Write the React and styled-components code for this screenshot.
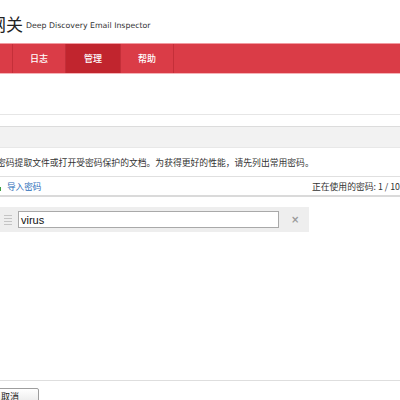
import React from "react";
import styled, { createGlobalStyle } from "styled-components";

const Global = createGlobalStyle`
  html, body { margin: 0; padding: 0; background: #fff; overflow: hidden; }
  body { font-family: "Liberation Sans", "Noto Sans CJK SC", sans-serif; color: #333; }
`;

const Page = styled.div`
  width: 400px;
  height: 400px;
  overflow: hidden;
  display: flex;
  flex-direction: column;
`;

const Header = styled.div`
  height: 43px;
  display: flex;
  align-items: center;
  padding-top: 4px;
  box-sizing: border-box;
  white-space: nowrap;
`;

const Brand = styled.span`
  font-family: "Noto Sans CJK SC", sans-serif;
  font-size: 17px;
  color: #222;
  margin-left: -11px;
`;

const Product = styled.span`
  font-family: "DejaVu Sans", sans-serif;
  font-size: 7.8px;
  color: #333;
  margin-left: 3px;
  margin-top: 3px;
`;

const Nav = styled.div`
  height: 31px;
  background: #da3c47;
  border-top: 1px solid #f29aa0;
  border-bottom: 1px solid #f5b3b7;
  box-sizing: border-box;
  display: flex;
  padding-left: 12px;
`;

const NavItem = styled.div`
  width: ${(p) => p.$w}px;
  display: flex;
  align-items: center;
  justify-content: center;
  color: #fff;
  font-family: "Noto Sans CJK SC", sans-serif;
  font-size: 9px;
  font-weight: 500;
  background: ${(p) => (p.$active ? "#c1252e" : "transparent")};
  border-left: 1px solid #c42f39;
  box-sizing: border-box;
  &:last-child { border-right: 1px solid #c42f39; }
`;

const Divider = styled.div`
  margin-top: 40px;
  border-top: 1px solid #e6e6e6;
`;

const Band = styled.div`
  margin-top: 11px;
  height: 22px;
  background: #f2f2f2;
  border-top: 1px solid #dcdcdc;
  border-bottom: 1px solid #e8e8e8;
  box-sizing: border-box;
`;

const Desc = styled.div`
  margin-top: 9px;
  margin-left: -3px;
  font-family: "Noto Sans CJK SC", sans-serif;
  font-size: 8.8px;
  line-height: 12px;
  color: #333;
  white-space: nowrap;
`;

const Toolbar = styled.div`
  margin-top: 7px;
  height: 21px;
  border-top: 1px solid #e0e0e0;
  border-bottom: 2px solid #dadada;
  box-sizing: border-box;
  display: flex;
  align-items: center;
  justify-content: space-between;
  white-space: nowrap;
`;

const ImportLink = styled.span`
  display: flex;
  align-items: center;
  gap: 6px;
  margin-left: -9px;
  font-family: "Noto Sans CJK SC", sans-serif;
  font-size: 8.6px;
  color: #2a6cb8;
`;

const Counter = styled.span`
  font-family: "Noto Sans CJK SC", sans-serif;
  font-size: 8.8px;
  color: #333;
`;

const ItemRow = styled.div`
  margin-top: 10px;
  width: 309px;
  height: 25px;
  background: #eeeeee;
  display: flex;
  align-items: center;
  box-sizing: border-box;
`;

const Handle = styled.div`
  width: 8px;
  margin-left: 4px;
  margin-right: 6px;
  display: flex;
  flex-direction: column;
  gap: 2px;
  & > span { height: 1px; background: #c4c4c4; display: block; }
`;

const Field = styled.div`
  width: 261px;
  height: 17px;
  background: #fff;
  border: 1px solid #a9a9a9;
  box-sizing: border-box;
  display: flex;
  align-items: center;
  padding-left: 2px;
  font-family: "Liberation Sans", sans-serif;
  font-size: 11px;
  color: #111;
`;

const Remove = styled.span`
  margin-left: 12px;
  font-family: "DejaVu Sans", sans-serif;
  font-size: 10px;
  font-weight: bold;
  color: #9a9a9a;
`;

const Spacer = styled.div`
  flex: 1;
`;

const Footer = styled.div`
  border-top: 1px solid #dedede;
  padding-top: 7px;
  height: 20px;
  box-sizing: border-box;
  flex-shrink: 0;
`;

const Button = styled.button`
  margin-left: -6px;
  width: 45px;
  height: 17px;
  border: 1px solid #9e9e9e;
  border-radius: 2px;
  background: linear-gradient(#ffffff, #e8e8e8);
  font-family: "Noto Sans CJK SC", sans-serif;
  font-size: 9px;
  color: #222;
  padding: 0 0 0 6px;
  text-align: left;
  line-height: 14px;
  display: block;
`;

function ImportIcon() {
  return (
    <svg width="10" height="10" viewBox="0 0 10 10">
      <rect x="1" y="1" width="7" height="8" fill="#e9eef5" stroke="#7a96bd" strokeWidth="1" />
      <rect x="6" y="6" width="4" height="4" fill="#3ea043" />
    </svg>
  );
}

export default function App() {
  return (
    <Page>
      <Global />
      <Header>
        <Brand>网关</Brand>
        <Product>Deep Discovery Email Inspector</Product>
      </Header>
      <Nav>
        <NavItem $w={53}>日志</NavItem>
        <NavItem $w={55} $active>管理</NavItem>
        <NavItem $w={54}>帮助</NavItem>
      </Nav>
      <Divider />
      <Band />
      <Desc>密码提取文件或打开受密码保护的文档。为获得更好的性能，请先列出常用密码。</Desc>
      <Toolbar>
        <ImportLink>
          <ImportIcon />
          导入密码
        </ImportLink>
        <Counter>正在使用的密码: 1 / 10</Counter>
      </Toolbar>
      <ItemRow>
        <Handle>
          <span />
          <span />
          <span />
          <span />
        </Handle>
        <Field>virus</Field>
        <Remove>×</Remove>
      </ItemRow>
      <Spacer />
      <Footer>
        <Button>取消</Button>
      </Footer>
    </Page>
  );
}
